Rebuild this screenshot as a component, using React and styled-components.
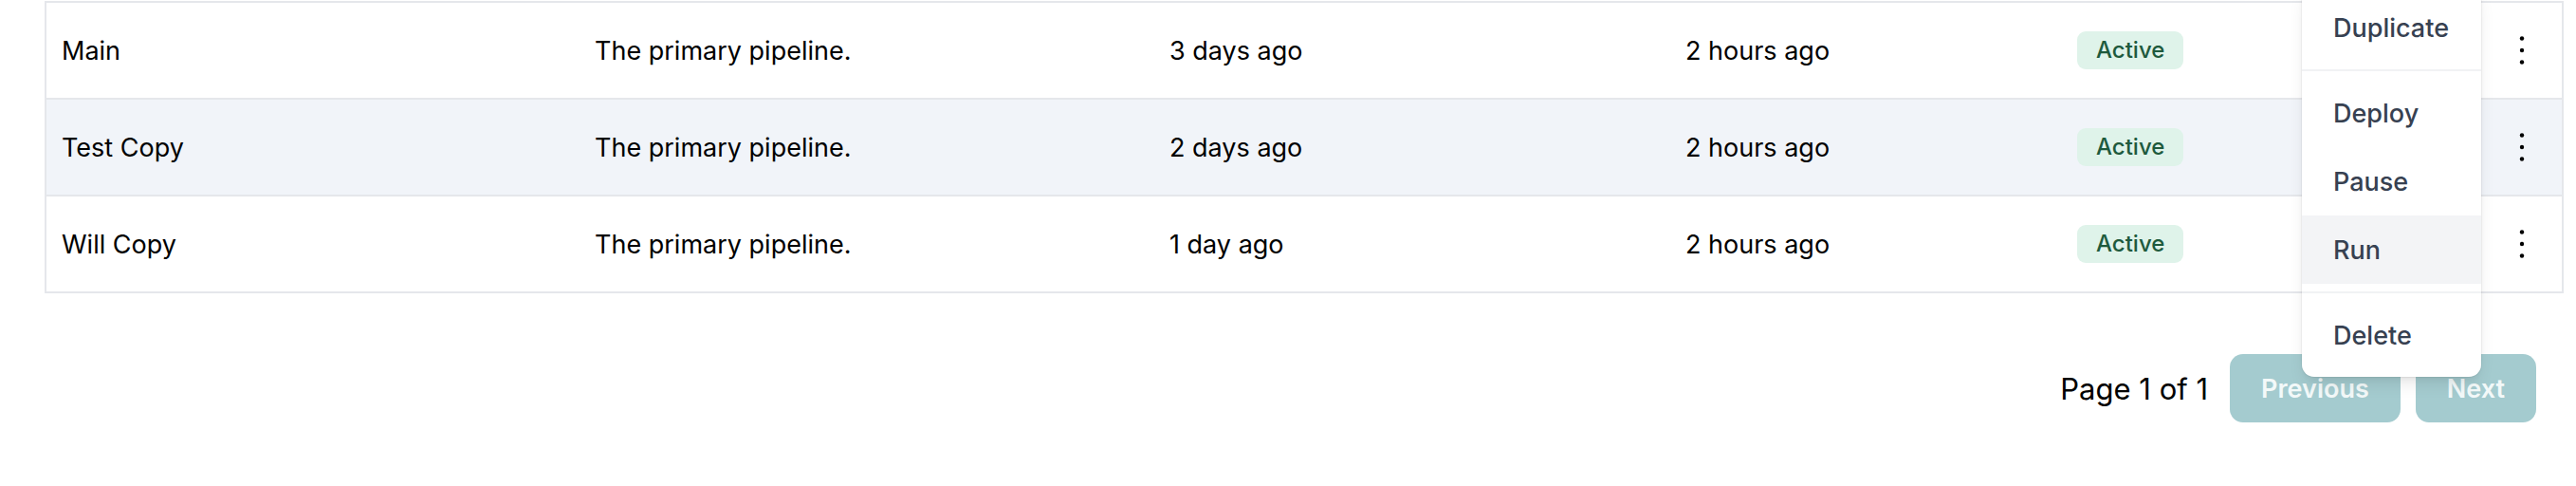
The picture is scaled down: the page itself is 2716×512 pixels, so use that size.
import React from "react";
import styled, { createGlobalStyle } from "styled-components";

const GlobalStyle = createGlobalStyle`
  html, body {
    margin: 0;
    padding: 0;
    background: #ffffff;
  }
  body {
    font-family: Inter, "Noto Sans", "Liberation Sans", sans-serif;
    color: #000;
  }
`;

const pipelines = [
  { name: "Main", description: "The primary pipeline.", created: "3 days ago", updated: "2 hours ago", status: "Active" },
  { name: "Test Copy", description: "The primary pipeline.", created: "2 days ago", updated: "2 hours ago", status: "Active" },
  { name: "Will Copy", description: "The primary pipeline.", created: "1 day ago", updated: "2 hours ago", status: "Active" },
];

const menuGroups = [
  [{ label: "Duplicate" }],
  [{ label: "Deploy" }, { label: "Pause" }, { label: "Run", active: true }],
  [{ label: "Delete" }],
];

const Page = styled.div`
  padding: 1px 13px 0 47px;
`;

const TableCard = styled.div`
  position: relative;
  border: 2px solid #e5e7eb;
  background: #fff;
`;

const Row = styled.div`
  display: grid;
  grid-template-columns: 562px 606px 544px 413px 443px 84px;
  height: 100px;
  align-items: center;
  background: ${(p) => (p.$striped ? "#f1f4f9" : "#ffffff")};
  & + & {
    border-top: 2px solid #e5e7eb;
  }
`;

const Cell = styled.div`
  padding-left: 16px;
  font-size: 27px;
  line-height: 1;
  white-space: nowrap;
  color: #000;
`;

const Badge = styled.span`
  display: inline-flex;
  align-items: center;
  height: 40px;
  padding: 0 20px;
  border-radius: 9px;
  background: #dff3ea;
  color: #1e5a3d;
  font-size: 24px;
  font-weight: 500;
`;

const KebabCell = styled.div`
  display: flex;
  justify-content: center;
  align-items: center;
`;

const KebabButton = styled.button`
  border: 0;
  background: transparent;
  padding: 0;
  display: flex;
  color: #000;
`;

const Menu = styled.div`
  position: absolute;
  left: 2378px;
  top: -18px;
  width: 189px;
  background: #fff;
  border-radius: 0 0 13px 13px;
  box-shadow: 0 10px 18px -4px rgba(0, 0, 0, 0.1), 0 4px 8px -4px rgba(0, 0, 0, 0.08),
    0 0 0 1px rgba(0, 0, 0, 0.04);
  z-index: 10;
  overflow: hidden;
`;

const MenuGroup = styled.div`
  padding: 8px 0;
  & + & {
    border-top: 2px solid #f1f2f4;
  }
`;

const MenuItem = styled.div`
  height: 72px;
  display: flex;
  align-items: center;
  padding-left: 33px;
  font-size: 27px;
  font-weight: 500;
  color: #374151;
  background: ${(p) => (p.$active ? "#f3f4f6" : "transparent")};
`;

const Pagination = styled.div`
  display: flex;
  justify-content: flex-end;
  align-items: center;
  gap: 16px;
  margin-top: 64px;
  padding-right: 29px;
`;

const PageLabel = styled.span`
  font-size: 31px;
  color: #000;
  margin-right: 7px;
`;

const PageButton = styled.button`
  height: 72px;
  padding: 0 33px;
  border: 0;
  border-radius: 14px;
  background: #a4cbcf;
  color: #f3f9f9;
  font-family: Inter, "Noto Sans", sans-serif;
  font-size: 27px;
  font-weight: 600;
`;

function KebabIcon() {
  return (
    <svg width="8" height="34" viewBox="0 0 8 34">
      <circle cx="4" cy="4.5" r="2.2" fill="currentColor" />
      <circle cx="4" cy="17" r="2.2" fill="currentColor" />
      <circle cx="4" cy="29.5" r="2.2" fill="currentColor" />
    </svg>
  );
}

export default function App() {
  return (
    <Page>
      <GlobalStyle />
      <TableCard>
        {pipelines.map((p, i) => (
          <Row key={p.name} $striped={i % 2 === 1}>
            <Cell>{p.name}</Cell>
            <Cell>{p.description}</Cell>
            <Cell>{p.created}</Cell>
            <Cell>{p.updated}</Cell>
            <Cell>
              <Badge>{p.status}</Badge>
            </Cell>
            <KebabCell>
              <KebabButton aria-label="Actions">
                <KebabIcon />
              </KebabButton>
            </KebabCell>
          </Row>
        ))}
        <Menu>
          {menuGroups.map((group, gi) => (
            <MenuGroup key={gi}>
              {group.map((item) => (
                <MenuItem key={item.label} $active={item.active}>
                  {item.label}
                </MenuItem>
              ))}
            </MenuGroup>
          ))}
        </Menu>
      </TableCard>
      <Pagination>
        <PageLabel>Page 1 of 1</PageLabel>
        <PageButton disabled>Previous</PageButton>
        <PageButton disabled>Next</PageButton>
      </Pagination>
    </Page>
  );
}
